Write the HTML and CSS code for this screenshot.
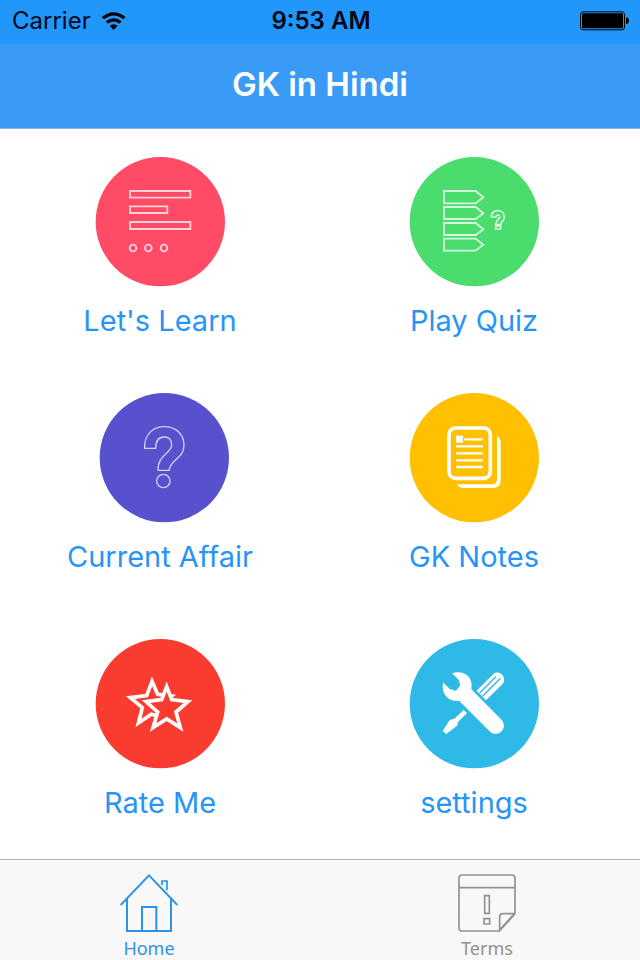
FILE: index.html
```html
<!DOCTYPE html>
<html lang="en">
<head>
<meta charset="utf-8">
<meta name="viewport" content="width=device-width, initial-scale=1">
<title>GK in Hindi</title>
<link rel="stylesheet" href="styles.css">
</head>
<body>
<div class="status">
  <div class="status-side">
    <span>Carrier</span>
    <svg class="wifi" viewBox="300 30 78 60" aria-hidden="true">
      <path d="M302 48 Q338 20 374 48 L367 55 Q338 32 309 55 Z M314 61 Q338 42 362 61 L355 68 Q338 55 321 68 Z M326 74 Q338 65 350 74 L338 87 Z"/>
    </svg>
  </div>
  <time class="clock">9:53 AM</time>
  <div class="status-side status-end">
    <svg class="battery" viewBox="780 32 150 60" aria-hidden="true">
      <rect x="781.500" y="34.500" width="132" height="54" rx="8" fill="none" stroke="#000" stroke-width="3"/>
      <rect x="786" y="39" width="123" height="45" rx="4"/>
      <path d="M918 51 Q927 53 927 61.500 Q927 70 918 72 Z"/>
    </svg>
  </div>
</div>
<header class="navbar"><h1>GK in Hindi</h1></header>

<main class="menu">
  <div class="row">
    <button class="tile" type="button">
      <svg class="tile-icon" viewBox="33 21 414 390" aria-hidden="true">
        <circle cx="241" cy="215" r="194" fill="#ff4b66"/>
        <g fill="none" stroke="#ffd0d8" stroke-width="5.500">
          <path d="M150 123H331V143H150Z M150 169H262V189H150Z M150 216H331V237H150Z"/>
          <circle cx="159" cy="294" r="10"/><circle cx="205" cy="294" r="10"/><circle cx="252" cy="294" r="10"/>
        </g>
      </svg>
      <span>Let's Learn</span>
    </button>
    <button class="tile" type="button">
      <svg class="tile-icon" viewBox="30 21 414 390" aria-hidden="true">
        <circle cx="238" cy="215" r="194" fill="#4adc6c"/>
        <g fill="none" stroke="#d4f8dc" stroke-width="5.500">
          <path d="M147 123H242L265 141.500L242 160H147Z M147 171H242L265 189.500L242 207H147Z M147 219H242L265 237.500L242 255H147Z M147 266H242L265 284.500L242 302H147Z"/>
          <path d="M289 201C289 188 297 182 309 182C321 182 328 190 328 201C328 215 317 213 317 224H302C302 208 314 209 314 201C314 197 312 195 309 195C305 195 303 197 303 201Z M302 228H317V237H302Z" stroke-width="5"/>
        </g>
      </svg>
      <span>Play Quiz</span>
    </button>
  </div>
  <div class="row">
    <button class="tile" type="button">
      <svg class="tile-icon" viewBox="93 24 414 390" aria-hidden="true">
        <circle cx="313" cy="218" r="194" fill="#5751cd"/>
        <g fill="none" stroke="#d3d1f3" stroke-width="4">
          <path d="M254 190C252 149 279 125 313 125C349 125 372 149 372 181C372 222 329 224 328 256H294C293 208 335 205 335 180C335 165 326 156 312 156C296 156 287 167 287 190Z"/>
          <circle cx="310" cy="288" r="20"/>
        </g>
      </svg>
      <span>Current Affair</span>
    </button>
    <button class="tile" type="button">
      <svg class="tile-icon" viewBox="30 24 414 390" aria-hidden="true">
        <circle cx="238" cy="218" r="194" fill="#fec001"/>
        <rect x="162" y="129" width="124" height="151" rx="20" fill="none" stroke="#fff" stroke-width="11"/>
        <path d="M183 152H204V173H183Z" fill="#fff"/>
        <path d="M211 163H261M186 184H261M186 205H261M186 226H261M186 246H261" fill="none" stroke="#fff" stroke-width="7" stroke-linecap="round"/>
        <path d="M306 152Q317 158 317 172V286Q317 309 294 309H206Q192 309 186 298H291Q306 298 306 283Z" fill="#fff"/>
      </svg>
      <span>GK Notes</span>
    </button>
  </div>
  <div class="row row-last">
    <button class="tile" type="button">
      <svg class="tile-icon" viewBox="33 27 414 390" aria-hidden="true">
        <circle cx="241" cy="221" r="194" fill="#fa3c30"/>
        <g fill="#fa3c30" stroke="#fff" stroke-width="11" stroke-miterlimit="10">
          <path d="M216 154L233 193L275 198L244 224L253 262L214 253L175 279L187 233L151 203L200 197Z"/>
          <path d="M260 170L275 209L324 215L288 246L301 293L260 267L219 293L233 246L198 215L245 209Z"/>
        </g>
      </svg>
      <span>Rate Me</span>
    </button>
    <button class="tile" type="button">
      <svg class="tile-icon" viewBox="30 27 414 390" aria-hidden="true">
        <circle cx="238" cy="221" r="194" fill="#2fb9e7"/>
        <g fill="#fff">
          <path d="M245 182L295 132C311 119 333 137 326 157L322 163L273 211Z"/>
          <path d="M206 240L216 249L189 276L186 287L154 312L143 303L164 270L178 266Z"/>
          <path d="M171 130C199 120 229 134 230 165L229 178L318 268C342 294 311 324 286 306L193 213C166 216 144 199 143 171L144 157L164 177L183 182L196 166L191 149Z"/>
        </g>
        <path d="M255 188L302 141M264 197L315 146" stroke="#2fb9e7" stroke-width="4" stroke-linecap="round" fill="none"/>
      </svg>
      <span>settings</span>
    </button>
  </div>
</main>

<nav class="tabs" aria-label="Tabs">
  <a class="tab tab-active" href="#home" aria-current="page">
    <svg class="tab-icon" viewBox="120 69 174 180" aria-hidden="true" fill="none" stroke="currentColor" stroke-width="6">
      <path d="M122 165L207 76L292 165M141 146V243H273V146M186 242V171H229V242"/>
      <path d="M246 105V93H261V121" stroke-width="5"/>
    </svg>
    <span>Home</span>
  </a>
  <a class="tab" href="#terms">
    <svg class="tab-icon" viewBox="114 69 174 180" aria-hidden="true" fill="none" stroke="currentColor" stroke-width="5">
      <path d="M238 243H127Q117 243 117 233V85Q117 75 127 75H275Q285 75 285 85V191L239 242V200Q239 191 249 191H285M117 113H285M194 137H208V190H194Z"/>
      <path d="M192 206H209V222H192Z"/>
      <path d="M241 238L281 194" stroke-width="6"/>
    </svg>
    <span>Terms</span>
  </a>
</nav>
</body>
</html>
```

FILE: styles.css
```css
* {
  box-sizing: border-box;
}

body {
  margin: 0;
  min-height: 100vh;
  display: flex;
  flex-direction: column;
  background: #fff;
  font-family: Inter, "Liberation Sans", sans-serif;
}

.status {
  display: flex;
  align-items: center;
  height: 44px;
  padding: 0 10px 2px 12px;
  background: #2196fb;
  color: #000819;
  font-size: 24px;
  line-height: 28px;
}

.status-side {
  flex: 1;
  display: flex;
  align-items: center;
  gap: 10px;
}

.status-end {
  justify-content: flex-end;
}

.wifi {
  width: 26px;
  height: 20px;
}

.battery {
  width: 50px;
  height: 20px;
}

.clock {
  font-weight: 600;
}

.navbar {
  display: flex;
  align-items: center;
  justify-content: center;
  height: 85px;
  padding-bottom: 4px;
  background: #3a9bf7;
  border-bottom: 1px solid #8fb5da;
  color: #fff;
}

.navbar h1 {
  margin: 0;
  font-size: 33px;
  line-height: 40px;
  font-weight: 600;
}

.menu {
  flex: 1;
  display: flex;
  flex-direction: column;
  gap: 54px;
  padding: 28px 9px 38px 3px;
}

.row {
  display: grid;
  grid-template-columns: 1fr 1fr;
}

.row-last {
  padding-top: 10px;
}

.tile {
  display: flex;
  flex-direction: column;
  align-items: center;
  gap: 16px;
  padding: 0;
  border: 0;
  background: none;
  color: #2894f6;
  font-family: inherit;
  font-size: 29px;
  line-height: 36px;
  cursor: pointer;
}

.tile-icon {
  width: 138px;
  height: 130px;
}

.tabs {
  display: flex;
  justify-content: space-between;
  height: 101px;
  padding: 13px 124px 0 120px;
  background: #f8f8f8;
  border-top: 1px solid #b2b2b2;
}

.tab {
  display: flex;
  flex-direction: column;
  align-items: center;
  gap: 3px;
  width: 58px;
  color: #929292;
  font-family: "Noto Sans", sans-serif;
  font-size: 18px;
  line-height: 24px;
  text-decoration: none;
}

.tab-active {
  color: #2d93e4;
}

.tab-icon {
  width: 58px;
  height: 60px;
}
```
